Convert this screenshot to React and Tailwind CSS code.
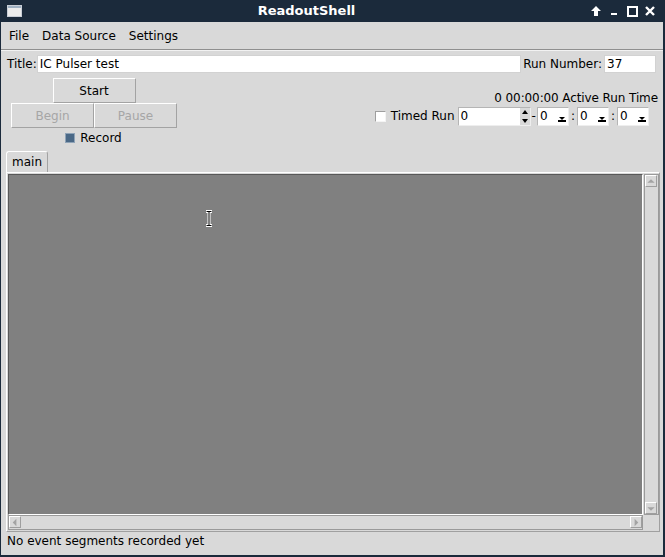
import React from "react";

function TitleButtons() {
  return (
    <div className="flex w-[80px] items-center gap-[6px] pl-[5px]">
      <svg width="12" height="12" viewBox="0 0 12 12">
        <path d="M6 1 L11 6 L8 6 L8 11 L4 11 L4 6 L1 6 Z" fill="white" />
      </svg>
      <svg width="12" height="12" viewBox="0 0 12 12">
        <rect x="3" y="8" width="6" height="2" fill="white" />
      </svg>
      <svg width="12" height="12" viewBox="0 0 12 12">
        <rect x="2" y="2" width="9" height="9" fill="none" stroke="white" strokeWidth="2" />
      </svg>
      <svg width="12" height="12" viewBox="0 0 12 12">
        <path d="M2 2 L10 10 M10 2 L2 10" stroke="white" strokeWidth="2.4" />
      </svg>
    </div>
  );
}

function Button({ label, disabled, className = "" }) {
  return (
    <div
      className={`flex h-[25px] w-[83px] items-center justify-center border border-t-white border-l-white border-r-[#a3a3a3] border-b-[#a3a3a3] ${
        disabled ? "text-[#a6a6a6]" : "text-black"
      } ${className}`}
    >
      {label}
    </div>
  );
}

function Combo({ value }) {
  return (
    <div className="flex h-[19px] w-[32px] items-center justify-between border border-t-[#b5b5b5] border-l-[#b5b5b5] border-r-[#eeeeee] border-b-[#eeeeee] bg-white pl-[2px] pr-[1px]">
      <span>{value}</span>
      <svg width="10" height="9" viewBox="0 0 10 9" className="mt-[5px]">
        <path d="M2 3 L8 3 L5 6 Z" fill="black" />
        <rect x="1" y="6" width="8" height="2" fill="black" />
      </svg>
    </div>
  );
}

function ArrowBtn({ dir }) {
  const d = {
    up: "M1.5 7 L9.5 7 L5.5 3 Z",
    down: "M1.5 4 L9.5 4 L5.5 8 Z",
    left: "M7 1.5 L7 9.5 L3 5.5 Z",
    right: "M4 1.5 L4 9.5 L8 5.5 Z",
  }[dir];
  return (
    <div className="flex h-[12px] w-[12px] items-center justify-center border border-t-white border-l-white border-r-[#9e9e9e] border-b-[#9e9e9e]">
      <svg width="11" height="11" viewBox="0 0 11 11">
        <path d={d} fill="#a3a3a3" />
      </svg>
    </div>
  );
}

export default function App() {
  return (
    <div className="relative flex h-[557px] w-[665px] flex-col overflow-hidden bg-[#1b2a3b] font-['DejaVu_Sans',sans-serif] text-[12px] leading-[14px] text-black">
      {/* window title bar */}
      <div className="flex h-[22px] shrink-0 items-center">
        <div className="w-[28px] pl-[7px]">
          <svg width="15" height="12" viewBox="0 0 15 12">
            <rect x="0.5" y="0.5" width="14" height="11" fill="#ececec" stroke="#c9ced6" />
            <rect x="1" y="1" width="13" height="2" fill="#9fb0c2" />
          </svg>
        </div>
        <div className="flex-1 text-center text-[13px] font-bold text-white">ReadoutShell</div>
        <TitleButtons />
      </div>

      <div className="mb-[2px] ml-px mr-[2px] flex flex-1 flex-col bg-[#d9d9d9]">
        {/* menu bar */}
        <div className="flex h-[28px] shrink-0 items-center border-b border-b-[#8f8f8f] pl-[8px]">
          <span className="mr-[13px]">File</span>
          <span className="mr-[13px]">Data Source</span>
          <span>Settings</span>
        </div>
        <div className="h-px bg-[#f2f2f2]" />

        {/* title row */}
        <div className="mt-[4px] flex h-[18px] items-center pl-[6px] pr-[7px]">
          <span>Title:</span>
          <div className="flex h-[18px] flex-1 items-center border border-[#d2d2d2] bg-white pl-[2px]">
            IC Pulser test
          </div>
          <span className="ml-[2px] mr-[2px]">Run Number:</span>
          <div className="flex h-[18px] w-[52px] items-center border border-[#d2d2d2] bg-white pl-[2px]">37</div>
        </div>

        {/* controls */}
        <div className="mt-[5px] flex justify-between pl-[10px] pr-[5px]">
          <div className="flex w-[166px] flex-col items-center">
            <Button label="Start" />
            <div className="flex">
              <Button label="Begin" disabled />
              <Button label="Pause" disabled />
            </div>
            <div className="mt-[3px] flex items-center gap-[5px] pr-[1px]">
              <div className="h-[10px] w-[10px] border border-[#8fa3b7] bg-[#4a6886]" />
              <span>Record</span>
            </div>
          </div>

          <div className="flex flex-col items-end pt-[13px]">
            <div className="h-[14px] tracking-[-0.1px]">0 00:00:00 Active Run Time</div>
            <div className="mr-[9px] mt-px flex h-[20px] items-center">
              <div className="mr-[5px] h-[11px] w-[11px] border border-t-[#9e9e9e] border-l-[#9e9e9e] border-r-[#f4f4f4] border-b-[#f4f4f4] bg-white" />
              <span className="mr-[3px]">Timed Run</span>
              <div className="flex h-[19px] w-[73px] items-center justify-between border border-t-[#b5b5b5] border-l-[#b5b5b5] border-r-[#eeeeee] border-b-[#eeeeee] bg-white pl-[2px]">
                <span>0</span>
                <div className="flex h-full w-[10px] flex-col">
                  <svg width="10" height="9" viewBox="0 0 10 9">
                    <rect x="0" y="0" width="10" height="9" fill="#d9d9d9" />
                    <path d="M2 6 L8 6 L5 2 Z" fill="black" />
                  </svg>
                  <svg width="10" height="8" viewBox="0 0 10 8">
                    <rect x="0" y="0" width="10" height="8" fill="#d9d9d9" />
                    <path d="M2 2 L8 2 L5 6 Z" fill="black" />
                  </svg>
                </div>
              </div>
              <span className="mx-px">-</span>
              <Combo value="0" />
              <span className="mx-[2px]">:</span>
              <Combo value="0" />
              <span className="mx-[2px]">:</span>
              <Combo value="0" />
            </div>
          </div>
        </div>

        {/* tabs */}
        <div className="mt-[6px] flex pl-[5px]">
          <div className="flex h-[21px] w-[42px] items-center justify-center rounded-t-[3px] border border-b-0 border-t-white border-l-white border-r-[#a3a3a3]">
            main
          </div>
        </div>
        <div className="ml-[5px] mr-[3px] flex flex-1 flex-col border border-t-white border-l-white border-r-[#a0a0a0] border-b-[#a0a0a0] pb-px pl-px pt-px">
          <div className="flex flex-1">
            <div className="flex-1 border border-t-[#585858] border-l-[#585858] border-r-white border-b-white bg-[#808080]" />
            <div className="ml-px flex w-[15px] flex-col justify-between border border-[#9a9a9a] bg-[#d9d9d9]">
              <ArrowBtn dir="up" />
              <ArrowBtn dir="down" />
            </div>
          </div>
          <div className="flex h-[15px] pr-[16px]">
            <div className="flex flex-1 justify-between border border-[#9a9a9a] bg-[#d9d9d9]">
              <ArrowBtn dir="left" />
              <ArrowBtn dir="right" />
            </div>
          </div>
        </div>

        {/* status */}
        <div className="h-[23px] shrink-0 pl-[6px] pt-[2px]">No event segments recorded yet</div>
      </div>

      {/* mouse cursor */}
      <svg className="absolute left-[204px] top-[210px]" width="10" height="17" viewBox="0 0 10 17">
        <path d="M2 1.5 H8 M2 15.5 H8 M5 1.5 V15.5" stroke="white" strokeWidth="3" />
        <path d="M2.5 1.5 H7.5 M2.5 15.5 H7.5 M5 1.5 V15.5" stroke="black" strokeWidth="1" />
      </svg>
    </div>
  );
}
